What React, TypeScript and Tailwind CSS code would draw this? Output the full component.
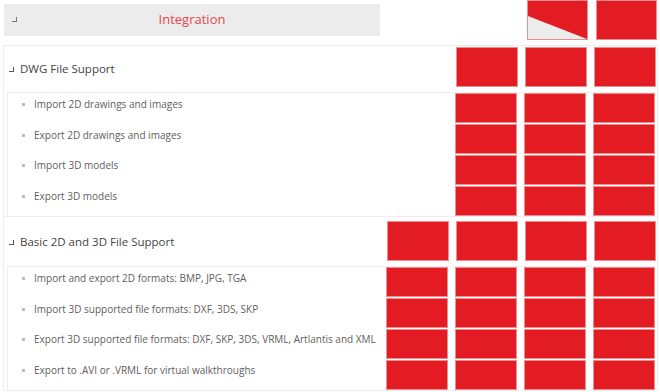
import React from 'react';

type Section = {
  title: string;
  cols: number;
  items: string[];
};

const sections: Section[] = [
  {
    title: 'DWG File Support',
    cols: 3,
    items: [
      'Import 2D drawings and images',
      'Export 2D drawings and images',
      'Import 3D models',
      'Export 3D models',
    ],
  },
  {
    title: 'Basic 2D and 3D File Support',
    cols: 4,
    items: [
      'Import and export 2D formats: BMP, JPG, TGA',
      'Import 3D supported file formats: DXF, 3DS, SKP',
      'Export 3D supported file formats: DXF, SKP, 3DS, VRML, Artlantis and XML',
      'Export to .AVI or .VRML for virtual walkthroughs',
    ],
  },
];

const Corner: React.FC<{ className?: string }> = ({ className }) => (
  <span className={`inline-block shrink-0 w-[5px] h-[5px] border-r-[1.5px] border-b-[1.5px] ${className ?? ''}`} />
);

const Cells: React.FC<{ count: number; tall?: boolean }> = ({ count, tall }) => (
  <div className="flex gap-[7px]">
    {Array.from({ length: count }).map((_, i) => (
      <div
        key={i}
        className={`w-[62px] ${tall ? 'h-[40px]' : 'h-[30px]'} bg-[#e31b23] border border-[#f08b90]`}
      />
    ))}
  </div>
);

const App: React.FC = () => {
  return (
    <div className="w-[660px] h-[392px] bg-white overflow-hidden font-['Open_Sans',sans-serif]">
      {/* Header */}
      <div className="flex h-[45px]">
        <div className="ml-[4px] mt-[4px] w-[376px] h-[32px] bg-[#ececec] flex items-center pl-[8px] pr-[8px]">
          <Corner className="border-[#777] -mt-[1px]" />
          <span className="flex-1 text-center text-[13px] text-[#e8474d] -ml-[5px]">Integration</span>
        </div>
        <div className="ml-auto mr-[3px] flex gap-[8px]">
          <div className="w-[61px] h-[40px] bg-[#e31b23] border border-[#f08b90]">
            <svg width="59" height="38" viewBox="0 0 59 38" className="block">
              <polygon points="0,15 59,38 0,38" fill="#ececec" />
            </svg>
          </div>
          <div className="w-[61px] h-[40px] bg-[#e31b23] border border-[#f08b90]" />
        </div>
      </div>

      {/* Table body */}
      <div className="ml-[3px] w-[655px] border-x border-[#eeeeee]">
        {sections.map((s, si) => (
          <div key={s.title} className="border-t border-[#eeeeee]">
            <div className={`flex ${si === 0 ? 'h-[46px]' : 'h-[49px]'} pl-[5px] pr-[1px]`}>
              <div className="flex-1 flex items-center">
                <Corner className="border-[#555] mt-[1px]" />
                <span className="ml-[6px] text-[11.5px] text-[#444]">{s.title}</span>
              </div>
              <div className={si === 0 ? 'mt-[1px]' : 'mt-[4px]'}>
                <Cells count={s.cols} tall />
              </div>
            </div>
            <div className="ml-[3px] border-l border-t border-[#eeeeee] pr-[2px]">
              {s.items.map((item) => (
                <div key={item} className="flex items-center h-[30.75px]">
                  <div className="flex-1 flex items-center mb-[8px]">
                    <span className="ml-[14px] w-[3px] h-[3px] bg-[#bbbbbb]" />
                    <span className="ml-[9px] text-[10px] text-[#606060]">{item}</span>
                  </div>
                  <Cells count={s.cols} />
                </div>
              ))}
            </div>
          </div>
        ))}
        <div className="border-t border-[#eeeeee]" />
      </div>
    </div>
  );
};

export default App;
